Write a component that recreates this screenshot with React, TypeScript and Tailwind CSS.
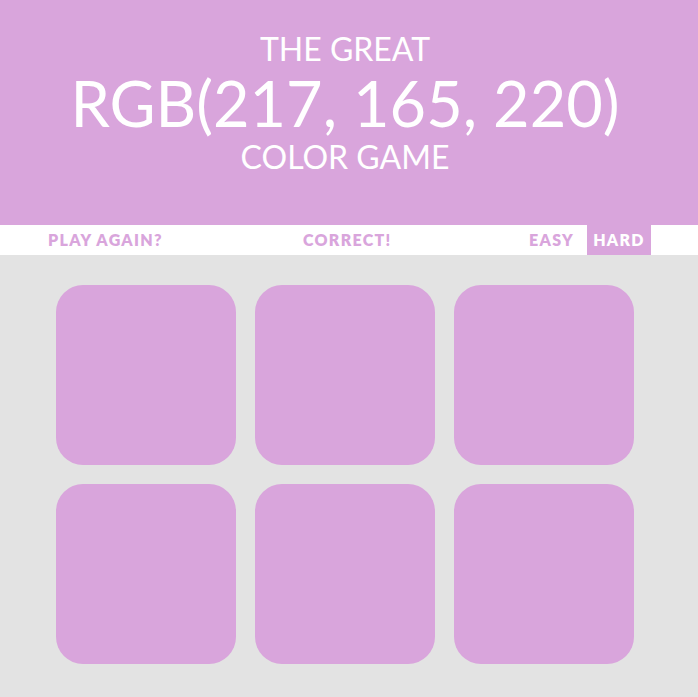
import React from "react";

const PINK = "bg-[#d9a5dc]";

export default function App() {
  const squares = [0, 1, 2, 3, 4, 5];

  return (
    <div className="min-h-[697px] bg-[#e3e3e3] font-['Lato',sans-serif]">
      {/* Header */}
      <header className={`${PINK} h-[225px] pt-[30px] pr-[8px] text-center text-white`}>
        <div className="text-[32px] leading-[38px]">THE GREAT</div>
        <div className="text-[63px] leading-[70px]">RGB(217, 165, 220)</div>
        <div className="text-[32px] leading-[38px]">COLOR GAME</div>
      </header>

      {/* Stripe */}
      <nav className="flex h-[30px] items-center bg-white text-[16px] font-extrabold tracking-[1.3px] text-[#d9a5dc]">
        <button className="ml-[48px] w-[200px] text-left">PLAY AGAIN?</button>
        <span className="ml-[55px] w-[200px] text-left">CORRECT!</span>
        <button className="ml-[26px] w-[58px] text-left">EASY</button>
        <button className={`${PINK} h-full w-[64px] text-white`}>HARD</button>
      </nav>

      {/* Squares */}
      <main className="grid grid-cols-[repeat(3,180px)] gap-[19px] pl-[56px] pt-[30px] pb-[33px]">
        {squares.map((i) => (
          <div key={i} className={`${PINK} h-[180px] w-[180px] rounded-[27px]`} />
        ))}
      </main>
    </div>
  );
}
